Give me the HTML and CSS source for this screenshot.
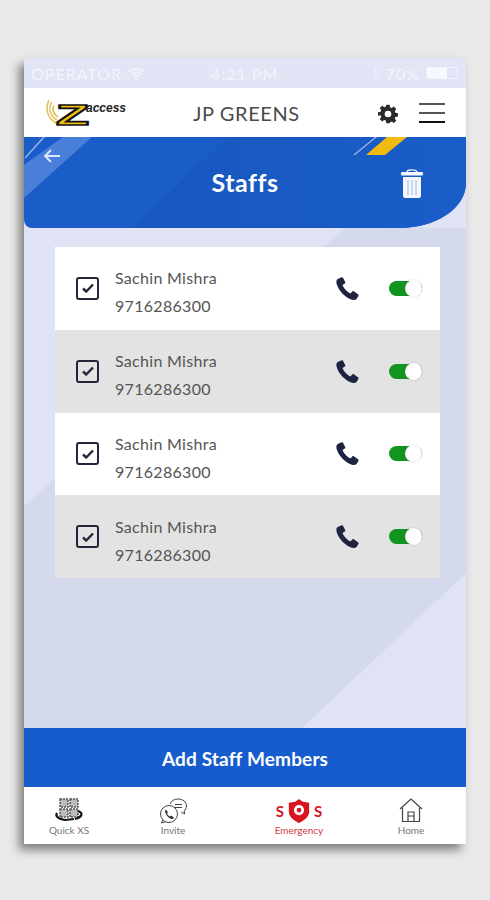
FILE: index.html
```html
<!DOCTYPE html>
<html lang="en">
<head>
    <meta charset="UTF-8">
    <meta name="viewport" content="width=device-width, initial-scale=1.0">
    <title>Staffs</title>
    <link rel="stylesheet" href="styles.css">
</head>
<body>

    <div class="phone">
        <svg class="backdrop" width="442" height="640" viewBox="0 0 442 640">
            <polygon points="0,418 321,140 442,140 442,485 278,640 0,640" fill="#d4d9ec"/>
        </svg>

        <div class="status-bar">
            <div class="status-left">
                <span>OPERATOR</span>
                <svg width="17" height="13" viewBox="0 0 17 13" fill="none" stroke="#f3f5fc" stroke-width="1.7">
                    <path d="M1 4.500 C5 .8 12 .8 16 4.500"/>
                    <path d="M3.600 7.200 C6.300 4.800 10.700 4.800 13.400 7.200"/>
                    <path d="M6.200 9.800 C7.600 8.700 9.400 8.700 10.800 9.800"/>
                    <circle cx="8.500" cy="11.600" r=".6"/>
                </svg>
            </div>
            <span class="status-time">4:21 PM</span>
            <div class="status-right">
                <svg width="9" height="14" viewBox="0 0 9 14" fill="none" stroke="#eceffa" stroke-width="1">
                    <path d="M1 4 L8 10 L4.500 13 V1 L8 4 L1 10"/>
                </svg>
                <span>70%</span>
                <span class="battery"><span class="battery-level"></span></span>
            </div>
        </div>

        <div class="top-nav">
            <svg class="logo" width="84" height="36" viewBox="0 0 84 36">
                <g fill="none" stroke="#e5c163" stroke-width="1.600">
                    <path d="M11 28 C2 23 0 13 4 5"/>
                    <path d="M12 25 C5 21 3.500 14 6.500 7"/>
                    <path d="M13 22 C8 19 6.500 15 9 10"/>
                </g>
                <text class="logo-z" transform="translate(11 30) scale(1.8 1)" x="0" y="0">Z</text>
                <text class="logo-word" x="41" y="17">access</text>
            </svg>
            <span class="site-name">JP GREENS</span>
            <svg class="gear" width="20" height="20" viewBox="0 0 24 24" fill="#2a2a2a">
                <path fill-rule="evenodd" d="M10 1h4l.6 3.100 1.900.8 2.600-1.800 2.800 2.800-1.800 2.600.8 1.900 3.100.6v4l-3.100.6-.8 1.900 1.800 2.600-2.800 2.800-2.600-1.800-1.900.8L14 23h-4l-.6-3.100-1.900-.8-2.600 1.800-2.800-2.800 1.800-2.600-.8-1.900L0 14v-4l3.100-.6.8-1.900L2.100 4.900l2.800-2.800 2.600 1.800 1.900-.8zM12 8a4 4 0 1 0 0 8 4 4 0 0 0 0-8z"/>
            </svg>
            <div class="menu-icon"><span></span><span></span><span></span></div>
        </div>

        <div class="header">
            <svg class="header-art" width="442" height="91" viewBox="0 0 442 91">
                <defs>
                    <linearGradient id="band" x1="0" y1="0" x2="1" y2="0">
                        <stop offset="0" stop-color="#1757bf"/>
                        <stop offset="1" stop-color="#1a5dc8"/>
                    </linearGradient>
                </defs>
                <polygon points="0,28 39,0 68,0 0,61" fill="#4a7fd9"/>
                <polygon points="1,20 19,0 21,0 1,22" fill="#9db8ea"/>
                <polygon points="109,91 203,0 442,0 442,91" fill="url(#band)"/>
                <polygon points="342,18 363,0 383,0 361,18" fill="#f2b90f"/>
                <polygon points="329,18 351,0 353,0 331,18" fill="#9db8ea"/>
            </svg>
            <svg class="back-icon" width="18" height="14" viewBox="0 0 18 14" fill="none" stroke="#dfe8fa" stroke-width="1.8">
                <path d="M17 7H2M8 1L2 7l6 6"/>
            </svg>
            <h1>Staffs</h1>
            <svg class="trash-icon" width="22" height="30" viewBox="0 0 22 30">
                <path d="M6 3.500C6 1 8 .8 11 .8s5 .2 5 2.700" fill="none" stroke="#e8effc" stroke-width="1.300"/>
                <rect x="0" y="3" width="22" height="3.500" rx="1" fill="#f4f7fe"/>
                <path d="M2 8h18v19a2 2 0 0 1-2 2H4a2 2 0 0 1-2-2z" fill="#f4f7fe"/>
                <path d="M7 11v15M11 11v15M15 11v15" stroke="#9fb8e6" stroke-width="1"/>
            </svg>
        </div>

        <div class="staff-list">
            <div class="staff-row">
                <span class="check"><svg width="12" height="10" viewBox="0 0 12 10" fill="none" stroke="#23263a" stroke-width="2.400"><path d="M1 5.500l3.200 3L11 1.500"/></svg></span>
                <div class="staff-info"><div>Sachin Mishra</div><div>9716286300</div></div>
                <svg class="phone-icon" width="24" height="25" viewBox="0 0 24 24" fill="#1d2340"><path d="M6.600 0.800L2.700 2.400C1 3.400 1 6 2.200 9c2.300 5.800 7 10.800 12.800 13.500 2.900 1.300 5.300 1.200 6.700-.3l1.700-2.800c.3-.6.100-1.200-.4-1.600l-4.200-3c-.5-.3-1.100-.3-1.500.2l-1.900 2c-3.300-1.400-6.500-4.900-7.900-8.500l2.300-1.400c.5-.3.700-.9.500-1.400L8 1.300C7.800.8 7.200.6 6.600.8z"/></svg>
                <span class="toggle"><span class="knob"></span></span>
            </div>
            <div class="staff-row">
                <span class="check"><svg width="12" height="10" viewBox="0 0 12 10" fill="none" stroke="#23263a" stroke-width="2.400"><path d="M1 5.500l3.200 3L11 1.500"/></svg></span>
                <div class="staff-info"><div>Sachin Mishra</div><div>9716286300</div></div>
                <svg class="phone-icon" width="24" height="25" viewBox="0 0 24 24" fill="#1d2340"><path d="M6.600 0.800L2.700 2.400C1 3.400 1 6 2.200 9c2.300 5.800 7 10.800 12.800 13.500 2.900 1.300 5.300 1.200 6.700-.3l1.700-2.800c.3-.6.100-1.200-.4-1.600l-4.200-3c-.5-.3-1.100-.3-1.500.2l-1.900 2c-3.300-1.400-6.500-4.900-7.900-8.500l2.300-1.400c.5-.3.700-.9.500-1.400L8 1.300C7.800.8 7.200.6 6.600.8z"/></svg>
                <span class="toggle"><span class="knob"></span></span>
            </div>
            <div class="staff-row">
                <span class="check"><svg width="12" height="10" viewBox="0 0 12 10" fill="none" stroke="#23263a" stroke-width="2.400"><path d="M1 5.500l3.200 3L11 1.500"/></svg></span>
                <div class="staff-info"><div>Sachin Mishra</div><div>9716286300</div></div>
                <svg class="phone-icon" width="24" height="25" viewBox="0 0 24 24" fill="#1d2340"><path d="M6.600 0.800L2.700 2.400C1 3.400 1 6 2.200 9c2.300 5.800 7 10.800 12.800 13.500 2.900 1.300 5.300 1.200 6.700-.3l1.700-2.800c.3-.6.100-1.200-.4-1.600l-4.200-3c-.5-.3-1.100-.3-1.500.2l-1.900 2c-3.300-1.400-6.500-4.900-7.900-8.500l2.300-1.400c.5-.3.700-.9.500-1.400L8 1.300C7.800.8 7.200.6 6.600.8z"/></svg>
                <span class="toggle"><span class="knob"></span></span>
            </div>
            <div class="staff-row">
                <span class="check"><svg width="12" height="10" viewBox="0 0 12 10" fill="none" stroke="#23263a" stroke-width="2.400"><path d="M1 5.500l3.200 3L11 1.500"/></svg></span>
                <div class="staff-info"><div>Sachin Mishra</div><div>9716286300</div></div>
                <svg class="phone-icon" width="24" height="25" viewBox="0 0 24 24" fill="#1d2340"><path d="M6.600 0.800L2.700 2.400C1 3.400 1 6 2.200 9c2.300 5.800 7 10.800 12.800 13.500 2.900 1.300 5.300 1.200 6.700-.3l1.700-2.800c.3-.6.100-1.200-.4-1.600l-4.200-3c-.5-.3-1.100-.3-1.500.2l-1.900 2c-3.300-1.400-6.500-4.900-7.900-8.500l2.300-1.400c.5-.3.700-.9.500-1.400L8 1.300C7.800.8 7.200.6 6.600.8z"/></svg>
                <span class="toggle"><span class="knob"></span></span>
            </div>
        </div>

        <div class="add-button">Add Staff Members</div>

        <div class="tab-bar">
            <div class="tab tab-quick">
                <svg width="30" height="26" viewBox="0 0 30 26">
                    <g fill="#bbb" stroke="#555" stroke-width="1.500" stroke-dasharray="2 1">
                        <rect x="6" y="1" width="8" height="8"/>
                        <rect x="16" y="1" width="8" height="8"/>
                        <rect x="6" y="11" width="8" height="8"/>
                        <rect x="16" y="11" width="8" height="8"/>
                    </g>
                    <path d="M24 13c6 2 4 6-3 8M3 15c-2 3 1 6 8 7l9-1" fill="none" stroke="#111" stroke-width="2.200"/>
                </svg>
                <span>Quick XS</span>
            </div>
            <div class="tab tab-invite">
                <svg width="30" height="26" viewBox="0 0 30 26" fill="none" stroke="#444" stroke-width="1">
                    <circle cx="11" cy="16" r="8.500"/>
                    <path d="M4.500 22l-1 3 4-1.200"/>
                    <path d="M12 6c1.500-3.500 4.500-5 8-5 5 0 8.500 3 8.500 7 0 2-1 4-2.500 5l.8 3-3.500-1.800"/>
                    <path d="M17 6.500h7M17 9.500h7"/>
                    <path d="M8 11.500l2 3-1 1c.8 1.500 1.800 2.500 3 3l1-1 3 2-1 1.500c-3 .8-8-4-8-8.500z" fill="#333" stroke="none"/>
                </svg>
                <span>Invite</span>
            </div>
            <div class="tab tab-sos">
                <div class="sos-icon">
                    <span>S</span>
                    <svg width="24" height="26" viewBox="0 0 26 26"><path d="M13 0l4 3 7 1v10c0 5-5 9-11 12C7 23 2 19 2 14V4l7-1z" fill="#d8151f"/><circle cx="13" cy="12" r="5.500" fill="#fff"/><circle cx="13" cy="12" r="2.500" fill="#d8151f"/></svg>
                    <span>S</span>
                </div>
                <span>Emergency</span>
            </div>
            <div class="tab tab-home">
                <svg width="24" height="26" viewBox="0 0 24 26" fill="none" stroke="#444" stroke-width="1.200">
                    <path d="M1 11L12 1l11 10"/>
                    <path d="M3.500 9.500V23.500h17V9.500"/>
                    <path d="M9 23.500V14h6v9.500M9 18h6"/>
                </svg>
                <span>Home</span>
            </div>
        </div>
    </div>

</body>
</html>
```

FILE: styles.css
```css
body {
    margin: 0;
    height: 900px;
    overflow: hidden;
    background-color: #e9e9e9;
    font-family: 'Lato', 'Open Sans', sans-serif;
    color: #333;
}

.phone {
    position: relative;
    display: flex;
    flex-direction: column;
    width: 442px;
    height: 786px;
    margin: 58px 0 0 24px;
    background-color: #dfe3f4;
    box-shadow: -5px 6px 9px rgba(0, 0, 0, 0.45);
}

.backdrop {
    position: absolute;
    left: 0;
    top: 30px;
}

/* status bar */
.status-bar {
    position: relative;
    display: flex;
    align-items: center;
    height: 30px;
    padding: 0 8px 0 7px;
    background-color: #e1e5f5;
    color: #f3f5fc;
    font-size: 16px;
    letter-spacing: 1px;
}

.status-left {
    display: flex;
    align-items: center;
    gap: 6px;
    width: 180px;
}

.status-time {
    flex: 1;
}

.status-right {
    display: flex;
    align-items: center;
    gap: 6px;
}

.battery {
    display: block;
    width: 32px;
    height: 12px;
    border: 1px solid #f3f5fc;
    border-radius: 2px;
    box-sizing: border-box;
}

.battery-level {
    display: block;
    width: 20px;
    height: 10px;
    background-color: #f7f8fd;
}

/* white bar with logo */
.top-nav {
    position: relative;
    display: flex;
    align-items: center;
    height: 49px;
    padding: 0 21px 0 21px;
    background-color: #fff;
}

.logo {
    flex: none;
}

.logo-z {
    font-family: 'Liberation Sans', sans-serif;
    font-size: 30px;
    font-weight: 700;
    fill: #f1bf12;
    stroke: #111;
    stroke-width: 1.6px;
}

.logo-word {
    font-family: 'Liberation Sans', sans-serif;
    font-size: 12px;
    font-weight: 700;
    font-style: italic;
    fill: #222;
}

.site-name {
    flex: 1;
    padding-left: 64px;
    font-size: 20px;
    color: #4a4a4a;
    letter-spacing: 0.6px;
}

.gear {
    margin: 3px 21px 0 0;
}

.menu-icon {
    display: flex;
    flex-direction: column;
    gap: 7px;
    width: 26px;
}

.menu-icon span {
    display: block;
    height: 2px;
    background-color: #555;
}

.menu-icon span:last-child {
    background-color: #111;
}

/* blue header */
.header {
    position: relative;
    display: flex;
    justify-content: center;
    height: 91px;
    overflow: hidden;
    background-color: #1a5dc8;
    border-radius: 0 0 66px 8px / 0 0 45px 8px;
}

.header-art {
    position: absolute;
    left: 0;
    top: 0;
}

.back-icon {
    position: absolute;
    left: 19px;
    top: 12px;
}

.header h1 {
    position: relative;
    margin: 30px 0 0;
    font-size: 25px;
    font-weight: 700;
    line-height: 30px;
    letter-spacing: 0.5px;
    color: #fff;
}

.trash-icon {
    position: absolute;
    left: 377px;
    top: 32px;
}

/* staff rows */
.staff-list {
    position: relative;
    margin: 19px 26px 0 31px;
}

.staff-row {
    display: flex;
    align-items: center;
    height: 82.750px;
    padding: 0 18px 0 21px;
    box-sizing: border-box;
    background-color: #fff;
}

.staff-row:nth-child(even) {
    background-color: #e3e3e3;
}

.check {
    display: flex;
    align-items: center;
    justify-content: center;
    width: 19px;
    height: 19px;
    border: 2px solid #23263a;
    border-radius: 3px;
}

.staff-info {
    flex: 1;
    margin-left: 16px;
    padding-top: 8px;
    font-size: 16px;
    line-height: 28px;
    color: #555;
    letter-spacing: 0.3px;
}

.phone-icon {
    margin-right: 30px;
}

.toggle {
    position: relative;
    display: block;
    width: 33px;
    height: 15px;
    border-radius: 8px;
    background-color: #13931f;
}

.knob {
    position: absolute;
    right: 0;
    top: -1px;
    width: 17px;
    height: 17px;
    border-radius: 50%;
    background-color: #fff;
    box-shadow: 0 0 2px rgba(0, 0, 0, 0.2);
}

/* bottom */
.add-button {
    position: relative;
    margin-top: auto;
    height: 59px;
    background-color: #175ccc;
    color: #fff;
    font-size: 19px;
    font-weight: 700;
    line-height: 61px;
    letter-spacing: 0.15px;
    text-align: center;
}

.tab-bar {
    position: relative;
    display: flex;
    height: 57px;
    background-color: #fff;
    font-size: 10px;
    color: #777;
}

.tab {
    display: flex;
    flex-direction: column;
    align-items: center;
    padding-top: 11px;
    box-sizing: border-box;
}

.tab svg {
    display: block;
}

.tab-quick {
    width: 90px;
}

.tab-invite {
    width: 118px;
}

.tab-sos {
    width: 134px;
    color: #d33a42;
}

.tab-home {
    width: 90px;
}

.sos-icon {
    display: flex;
    align-items: center;
    gap: 3px;
    height: 26px;
    font-size: 15px;
    font-weight: 700;
    color: #d8151f;
}
```
